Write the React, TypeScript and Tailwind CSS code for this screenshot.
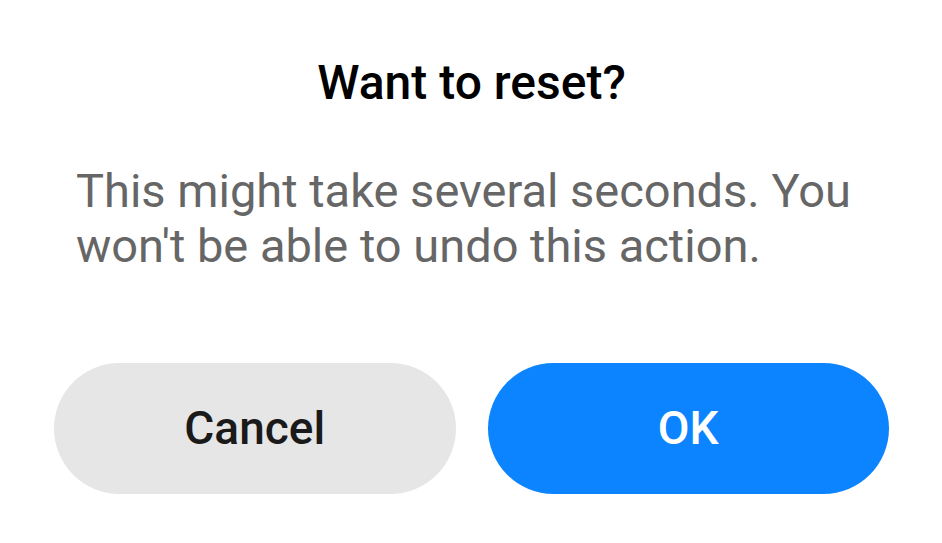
export default function App() {
  return (
    <div className="w-[942px] h-[543px] bg-white pl-[54px] pr-[53px] pt-[55px] font-['Roboto',_'Liberation_Sans',_sans-serif]">
      <h1 className="text-center text-[48px] leading-[56px] font-medium text-black">
        Want to reset?
      </h1>
      <p className="mt-[52px] pl-[22px] text-[47px] leading-[55px] text-[#666666]">
        This might take several seconds. You won't be able to undo this action.
      </p>
      <div className="mt-[90px] flex gap-[32px]">
        <button className="flex-1 h-[131px] rounded-full bg-[#e6e6e6] text-[46px] font-medium text-[#1a1a1a]">
          Cancel
        </button>
        <button className="flex-1 h-[131px] rounded-full bg-[#0d84ff] text-[46px] font-medium text-white">
          OK
        </button>
      </div>
    </div>
  );
}
